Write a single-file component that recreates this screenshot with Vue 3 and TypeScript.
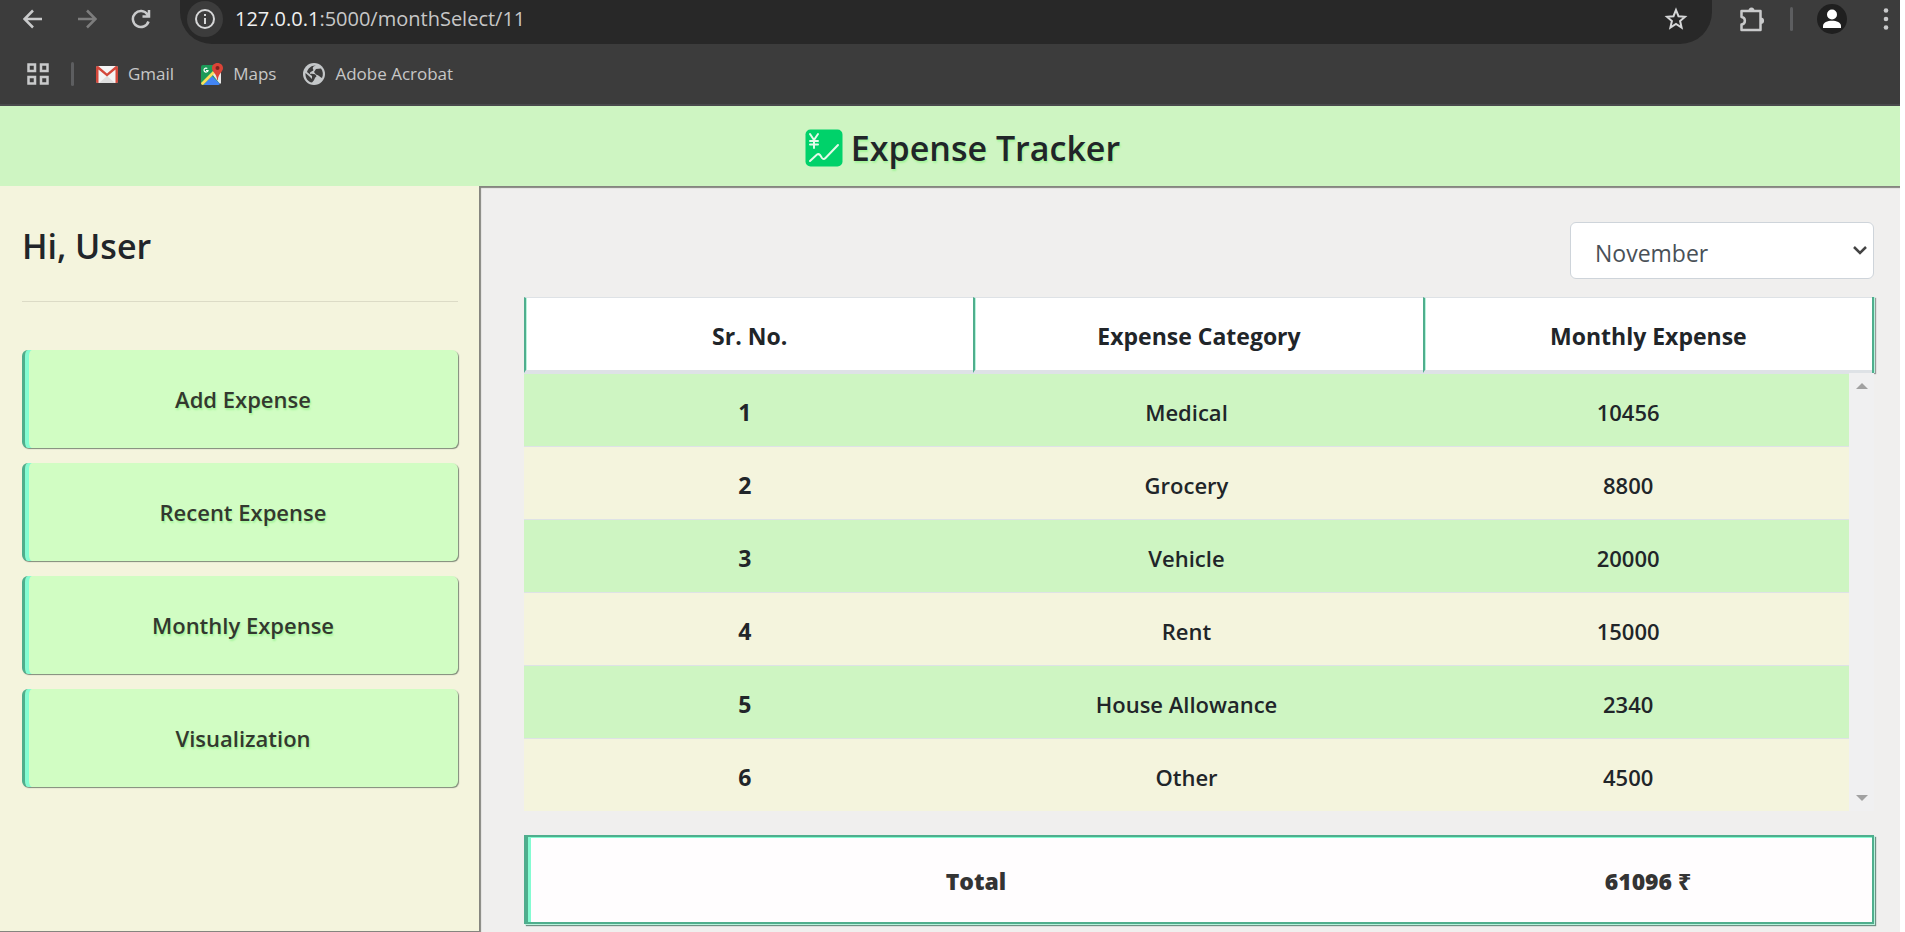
<script setup lang="ts">
import { ref } from 'vue'

interface Expense {
  category: string
  amount: number
}

const months: string[] = [
  'January', 'February', 'March', 'April', 'May', 'June',
  'July', 'August', 'September', 'October', 'November', 'December',
]
const month = ref<string>('November')

const navItems: string[] = ['Add Expense', 'Recent Expense', 'Monthly Expense', 'Visualization']

const expenses: Expense[] = [
  { category: 'Medical', amount: 10456 },
  { category: 'Grocery', amount: 8800 },
  { category: 'Vehicle', amount: 20000 },
  { category: 'Rent', amount: 15000 },
  { category: 'House Allowance', amount: 2340 },
  { category: 'Other', amount: 4500 },
]
const total = expenses.reduce((sum, e) => sum + e.amount, 0)
</script>

<template>
  <div class="window">
    <div class="browser">
      <div class="toolbar">
        <button class="tool" aria-label="Back">
          <svg width="20" height="20" viewBox="0 0 20 20"><path d="M19 10H2M10 1.5L1.5 10L10 18.5" /></svg>
        </button>
        <button class="tool dim" aria-label="Forward">
          <svg width="20" height="20" viewBox="0 0 20 20"><path d="M1 10H18M10 1.5L18.5 10L10 18.5" /></svg>
        </button>
        <button class="tool" aria-label="Reload">
          <svg width="20" height="20" viewBox="0 0 20 20"><path d="M17.5 12.5A8 8 0 1 1 16.5 5.5L18 7.5M18 1V7.5H11.5" /></svg>
        </button>
        <div class="omnibox">
          <button class="info" aria-label="Site information">
            <svg width="22" height="22" viewBox="0 0 22 22"><circle cx="11" cy="11" r="9" /><path d="M11 10V16M11 6V8" /></svg>
          </button>
          <span class="url"><span>127.0.0.1</span>:5000/monthSelect/11</span>
          <button class="star" aria-label="Bookmark this page">
            <svg width="24" height="24" viewBox="0 0 24 24"><path d="M12 3L14.5 9.2L21 9.8L16.1 14L17.6 20.5L12 17L6.4 20.5L7.900 14L3 9.8L9.5 9.2Z" /></svg>
          </button>
        </div>
        <button class="tool puzzle" aria-label="Extensions">
          <svg width="26" height="26" viewBox="0 0 26 26">
            <path d="M2.5 5H21.5V24H2.5V18.500C7 18 7 11.5 2.5 11Z" stroke-linejoin="round" />
            <path class="solid" d="M9.500 5A3 3.5 0 0 1 15.500 5ZM21.5 11.5A3.5 3.200 0 0 1 21.5 18Z" />
          </svg>
        </button>
        <span class="rule"></span>
        <button class="avatar" aria-label="Profile">
          <svg width="20" height="20" viewBox="0 0 20 20"><circle cx="10" cy="5.5" r="5" /><path d="M1 19V17C1 10 19 10 19 17V19Z" /></svg>
        </button>
        <button class="tool" aria-label="Menu">
          <svg class="dots" width="6" height="24" viewBox="0 0 6 24"><circle cx="3" cy="3.5" r="2.3" /><circle cx="3" cy="12" r="2.3" /><circle cx="3" cy="20.5" r="2.3" /></svg>
        </button>
      </div>
      <nav class="bookmarks" aria-label="Bookmarks">
        <button class="tool" aria-label="Apps">
          <svg width="22" height="22" viewBox="0 0 22 22"><path d="M1.5 1.5H8V8H1.5ZM14 1.5H20.5V8H14ZM1.5 14H8V20.5H1.5ZM14 14H20.5V20.5H14Z" /></svg>
        </button>
        <span class="rule"></span>
        <a class="bookmark" href="#gmail">
          <svg width="22" height="22" viewBox="0 0 22 22">
            <rect x="0" y="3" width="22" height="17" rx="2" fill="#f4f4f4" />
            <path d="M3 20L11 13L19 20Z" fill="#dedede" />
            <path d="M0 5C0 3 1.5 2.500 2.500 3.300L11 10.500L19.500 3.300C20.500 2.500 22 3 22 5V18.500Q22 20 20 20H19.500V6.500L11 13.500L2.500 6.500V20H2Q0 20 0 18.500Z" fill="#d4483b" />
          </svg>
          Gmail
        </a>
        <a class="bookmark" href="#maps">
          <svg width="22" height="22" viewBox="0 0 22 22">
            <path d="M2 2H18V22H2Q0 22 0 20V4Q0 2 2 2Z" fill="#1c9a58" />
            <path d="M11 11L18 5H20V20L19 21Z" fill="#e8e8e8" />
            <path d="M2 22L11 13L19 21Q18 22 17 22Z" fill="#4285f4" />
            <path d="M0 20L12 8L14 10L2 22Q0 22 0 20Z" fill="#fbe05c" />
            <path d="M16.500 0C20 0 22 2.500 22 5C22 9 17.500 10 16.800 17H16.200C15.500 10 11 9 11 5C11 2.500 13 0 16.500 0Z" fill="#db4437" />
            <circle cx="16.5" cy="5" r="2" fill="#7b231e" />
            <path d="M6.3 5.500A2 2 0 1 0 7 7.500H5" fill="none" stroke="#fff" stroke-width="1.2" />
          </svg>
          Maps
        </a>
        <a class="bookmark" href="#acrobat">
          <svg width="22" height="22" viewBox="0 0 22 22">
            <circle cx="11" cy="11" r="11" fill="#c4c7c9" />
            <path d="M13 2.500C10 3 9 5 10.500 7C9 9 6.500 8.500 7 11C10 10.500 13 11 13.500 13.500C11 15 12 17 9 19.500C5 19 2 15 2.500 10L6.500 13.500L9 16L9 13L4 9C5 5 9 2 13 2.500ZM13 6L18 5.500C20 8 20.500 12 19 15C17 14.500 16 12 13 11.500L11 9Z" fill="#3c3c3c" />
          </svg>
          Adobe Acrobat
        </a>
      </nav>
    </div>

    <header class="banner">
      <svg width="38" height="38" viewBox="0 0 38 38" aria-hidden="true">
        <rect x="0.5" y="0.5" width="37" height="37" rx="5" fill="#00d26a" />
        <path d="M5 5L9 11L13 5M9 11V19M5 12H13M5 15.500H13M5 32L12 25.500Q13.500 24.500 15 26L17 29Q18.500 31 20.500 29L33 16" />
      </svg>
      <h1>Expense Tracker</h1>
    </header>

    <div class="body">
      <aside class="sidebar">
        <h2>Hi, User</h2>
        <hr />
        <nav class="menu" aria-label="Sections">
          <button v-for="item in navItems" :key="item">{{ item }}</button>
        </nav>
      </aside>

      <main class="content">
        <select v-model="month" aria-label="Month">
          <option v-for="m in months" :key="m">{{ m }}</option>
        </select>

        <div class="sheet">
          <table class="head">
            <thead>
              <tr><th>Sr. No.</th><th>Expense Category</th><th>Monthly Expense</th></tr>
            </thead>
          </table>
          <div class="scroller">
            <table class="rows">
              <tbody>
                <tr v-for="(e, i) in expenses" :key="e.category">
                  <th scope="row">{{ i + 1 }}</th>
                  <td>{{ e.category }}</td>
                  <td>{{ e.amount }}</td>
                </tr>
              </tbody>
            </table>
            <div class="track" aria-hidden="true">
              <svg width="12" height="6" viewBox="0 0 12 6"><path d="M0 6L6 0L12 6Z" /></svg>
              <svg width="12" height="6" viewBox="0 0 12 6"><path d="M0 0L6 6L12 0Z" /></svg>
            </div>
          </div>
        </div>

        <table class="total">
          <tbody>
            <tr><th colspan="2" scope="row">Total</th><td>{{ total }} ₹</td></tr>
          </tbody>
        </table>
      </main>
    </div>
  </div>
</template>

<style>
body {
  background: #fff;
}
</style>

<style scoped>
.window {
  display: flex;
  flex-direction: column;
  min-height: 100vh;
  margin-right: 5px;
  box-sizing: border-box;
  font-family: "Segoe UI", "Open Sans", "Noto Sans", sans-serif;
  font-size: 23px;
  line-height: 36px;
  color: #212529;
}
.window * {
  box-sizing: border-box;
}
button {
  font: inherit;
  color: inherit;
  border: 0;
  padding: 0;
  background: none;
}
svg {
  display: block;
  flex: none;
}
.browser {
  background: #3c3c3c;
  border-bottom: 2px solid #4a4a4d;
  height: 106px;
}
.toolbar {
  display: flex;
  align-items: center;
  height: 37px;
  padding-left: 23px;
  padding-right: 11px;
}
.tool svg {
  fill: none;
  stroke: #c9cacb;
  stroke-width: 2.5;
}
.tool.dim svg {
  stroke: #7d7d7d;
}
.tool .solid,
.tool .dots {
  fill: #c9cacb;
  stroke: none;
}
.toolbar > .tool + .tool {
  margin-left: 34px;
}
.omnibox {
  display: flex;
  align-items: center;
  flex: 1;
  align-self: flex-start;
  height: 44px;
  margin-left: 29px;
  padding: 0 24px 7px 7px;
  background: #282828;
  border-radius: 0 0 32px 32px;
}
.info {
  display: grid;
  place-items: center;
  width: 36px;
  height: 36px;
  border-radius: 50%;
  background: #3c3c3c;
}
.info svg,
.star svg {
  fill: none;
  stroke: #d6d7d8;
  stroke-width: 2;
}
.url {
  flex: 1;
  margin-left: 12px;
  font-size: 20px;
  color: #c7c7c7;
}
.url span {
  color: #f0f0f0;
}
.puzzle {
  margin-left: 27px;
}
.rule {
  width: 3px;
  height: 24px;
  border-radius: 2px;
  background: #5d5e60;
}
.toolbar .rule {
  margin: 0 24px 0 25px;
}
.avatar {
  display: grid;
  place-items: center;
  width: 30px;
  height: 30px;
  margin-right: 36px;
  border-radius: 50%;
  background: #1f1f1f;
}
.avatar svg {
  fill: #fff;
}
.bookmarks {
  display: flex;
  align-items: center;
  height: 74px;
  padding-left: 27px;
}
.bookmarks .rule {
  margin: 0 22px;
}
.bookmark {
  display: flex;
  align-items: center;
  gap: 10px;
  margin-right: 27px;
  font-size: 17px;
  line-height: 24px;
  color: #c7c7c7;
  text-decoration: none;
}
.banner {
  display: flex;
  align-items: center;
  justify-content: center;
  gap: 8px;
  height: 80px;
  padding-top: 4px;
  padding-left: 25px;
  background: #cef5c2;
}
.banner path {
  fill: none;
  stroke: #e3fbe9;
  stroke-width: 2;
  stroke-linecap: round;
}
h1,
h2 {
  margin: 0;
  font-size: 34px;
  line-height: 48px;
  font-weight: 600;
}
h1 {
  text-shadow: 1px 2px 2px #a5f59a;
}
.body {
  display: flex;
  flex: 1;
}
.sidebar {
  width: 479px;
  flex: none;
  padding: 36px 21px 24px 22px;
  border-bottom: 1px solid #85857f;
  background: #f4f4dd;
}
hr {
  margin: 31px 0 48px;
  border: 0;
  border-top: 1px solid #dcdbc6;
}
.menu {
  display: flex;
  flex-direction: column;
  gap: 15px;
}
.menu button {
  height: 98px;
  padding-left: 3px;
  border-left: 3px solid #4fae8d;
  border-radius: 6px;
  background: #d1fdc3;
  box-shadow: inset 4px 0 0 #85fcd2, 1px 1px 1px #7f8a78;
  font-size: 22px;
  font-weight: 600;
  color: #33382f;
  text-shadow: 1px 2px 2px #a5f59a;
}
.content {
  display: flex;
  flex-direction: column;
  flex: 1;
  padding: 36px 26px 5px 45px;
  background: #f0efee;
  box-shadow: inset 2px 2px 1px #85857f;
}
select {
  appearance: none;
  align-self: flex-end;
  width: 304px;
  height: 57px;
  padding: 4px 24px 0;
  border: 1px solid #ced4da;
  border-radius: 6px;
  background: #fff url("data:image/svg+xml,%3Csvg xmlns='http://www.w3.org/2000/svg' width='14' height='9'%3E%3Cpath d='M1 1L7 7L13 1' fill='none' stroke='%23444' stroke-width='2.5'/%3E%3C/svg%3E") no-repeat right 6px center;
  font: inherit;
  color: #495057;
}
table {
  width: 100%;
  border-collapse: separate;
  border-spacing: 0;
  table-layout: fixed;
  text-align: center;
}
th,
td {
  padding: 3px 0 0;
}
.sheet {
  margin-top: 18px;
}
.head {
  background: #fff;
  border-right: 2px solid #4fae8d;
  box-shadow: 1px 0 0 #b9f3dc, 2px 1px 1px #9a9a9a;
}
.head th {
  height: 76px;
  border-top: 1px solid #dee2e6;
  border-bottom: 3px solid #dee2e6;
  border-left: 2px solid #4fae8d;
  box-shadow: inset 1px 0 0 #b9f3dc;
  font-weight: 700;
}
.scroller {
  display: flex;
}
.rows tr {
  background: #f4f4dd;
}
.rows tr:nth-child(odd) {
  background: #cef5c2;
}
.rows th,
.rows td {
  height: 73px;
  border-top: 1px solid #dee2e6;
}
.rows th {
  font-weight: 700;
}
.rows td {
  font-size: 22px;
  font-weight: 600;
}
.track {
  display: flex;
  flex-direction: column;
  flex: none;
  justify-content: space-between;
  align-items: center;
  width: 25px;
  padding: 10px 0;
  background: #f0f0f1;
}
.track svg {
  fill: #a1a1a1;
}
.total {
  margin-top: 24px;
  border: 2px solid #4fae8d;
  border-left-width: 4px;
  background: #fffdfe;
  box-shadow: inset 3px 1px 0 #85fcd2, 1px 1px 0 #b9f3dc, 2px 2px 1px #6f8f84;
}
.total th,
.total td {
  height: 85px;
  font-weight: 800;
  color: #343434;
}
</style>
